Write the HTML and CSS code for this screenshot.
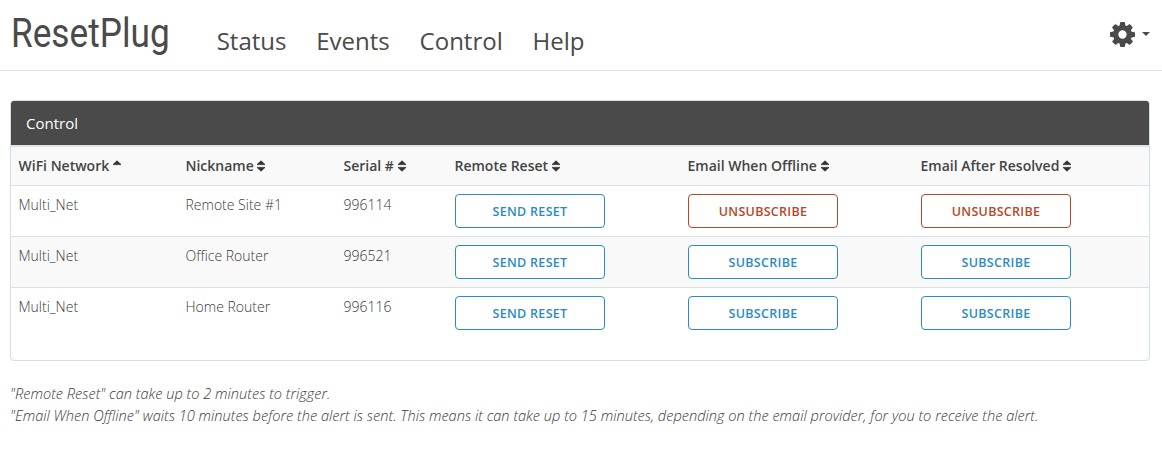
FILE: index.html
```html
<!DOCTYPE html>
<html lang="en">
  <head>
    <meta charset="UTF-8" />
    <title>ResetPlug Control</title>
    <link rel="stylesheet" href="styles.css">
  </head>
  <body>
    <svg class="defs" width="0" height="0">
      <symbol id="sort" viewBox="0 0 10 12">
        <path d="M1 4.6 L5 .8 L9 4.6 Z M1 7.4 L9 7.4 L5 11.2 Z" fill="currentColor" stroke="currentColor" stroke-width=".8" stroke-linejoin="round" />
      </symbol>
      <symbol id="sort-up" viewBox="0 0 10 12">
        <path d="M1 4.6 L5 .8 L9 4.6 Z" fill="currentColor" stroke="currentColor" stroke-width=".8" stroke-linejoin="round" />
      </symbol>
    </svg>

    <nav class="navbar">
      <a class="brand">ResetPlug</a>
      <ul class="nav-links">
        <li>Status</li>
        <li>Events</li>
        <li>Control</li>
        <li>Help</li>
      </ul>
      <div class="settings">
        <svg class="gear" viewBox="0 0 1536 1536">
          <path transform="translate(0 128)" d="M1024 640q0-106-75-181t-181-75-181 75-75 181 75 181 181 75 181-75 75-181zm512-109v222q0 12-8 23t-20 13l-185 28q-19 54-39 91 35 50 107 138 10 12 10 25t-9 23q-27 37-99 108t-94 71q-12 0-26-9l-138-108q-44 23-91 38-16 136-29 186-7 28-36 28h-222q-14 0-24.500-8.500t-11.500-21.500l-28-184q-49-16-90-37l-141 107q-10 9-25 9-14 0-25-11-126-114-165-168-7-10-7-23 0-12 8-23 15-21 51-66.500t54-70.500q-27-50-41-99l-183-27q-13-2-21-12.500t-8-23.500v-222q0-12 8-23t19-13l186-28q14-46 39-92-40-57-107-138-10-12-10-24 0-10 9-23 26-36 98.500-107.500t94.500-71.500q13 0 26 10l138 107q44-23 91-38 16-136 29-186 7-28 36-28h222q14 0 24.500 8.500t11.500 21.500l28 184q49 16 90 37l142-107q9-9 24-9 13 0 25 10 129 119 165 170 7 8 7 22 0 12-8 23-15 21-51 66.500t-54 70.500q26 50 41 98l183 28q13 2 21 12.500t8 23.500z" />
        </svg>
        <span class="caret"></span>
      </div>
    </nav>

    <main class="content">
      <section class="panel">
        <div class="panel-heading">Control</div>
        <table class="control-table">
          <thead>
            <tr>
              <th class="col-network">WiFi Network <svg class="sort-icon"><use href="#sort-up" /></svg></th>
              <th class="col-nick">Nickname <svg class="sort-icon"><use href="#sort" /></svg></th>
              <th class="col-serial">Serial # <svg class="sort-icon"><use href="#sort" /></svg></th>
              <th class="col-action">Remote Reset <svg class="sort-icon"><use href="#sort" /></svg></th>
              <th class="col-action">Email When Offline <svg class="sort-icon"><use href="#sort" /></svg></th>
              <th>Email After Resolved <svg class="sort-icon"><use href="#sort" /></svg></th>
            </tr>
          </thead>
          <tbody>
            <tr>
              <td>Multi_Net</td>
              <td>Remote Site #1</td>
              <td>996114</td>
              <td><button class="btn">Send Reset</button></td>
              <td><button class="btn btn-danger">Unsubscribe</button></td>
              <td><button class="btn btn-danger">Unsubscribe</button></td>
            </tr>
            <tr>
              <td>Multi_Net</td>
              <td>Office Router</td>
              <td>996521</td>
              <td><button class="btn">Send Reset</button></td>
              <td><button class="btn">Subscribe</button></td>
              <td><button class="btn">Subscribe</button></td>
            </tr>
            <tr>
              <td>Multi_Net</td>
              <td>Home Router</td>
              <td>996116</td>
              <td><button class="btn">Send Reset</button></td>
              <td><button class="btn">Subscribe</button></td>
              <td><button class="btn">Subscribe</button></td>
            </tr>
          </tbody>
        </table>
      </section>

      <div class="notes">
        <p>"Remote Reset" can take up to 2 minutes to trigger.</p>
        <p>"Email When Offline" waits 10 minutes before the alert is sent. This means it can take up to 15 minutes, depending on the email provider, for you to receive the alert.</p>
      </div>
    </main>
  </body>
</html>
```

FILE: styles.css
```css
body {
  margin: 0;
  font-family: "Open Sans", sans-serif;
  font-size: 14px;
  line-height: 20px;
  color: #444;
  background: #fff;
}
.defs {
  display: block;
  height: 0;
}
.navbar {
  display: flex;
  height: 70px;
  padding: 0 12px 0 10.5px;
  border-bottom: 1px solid #d6e4ec;
}
.brand {
  display: block;
  width: 158px;
  margin-top: 9px;
  font-family: Roboto, sans-serif;
  font-size: 40px;
  line-height: 50px;
  color: #4a4a4a;
  white-space: nowrap;
  transform: scaleX(0.88);
  transform-origin: left center;
}
.nav-links {
  display: flex;
  gap: 30px;
  margin: 24px 0 0 48.2px;
  padding: 0;
  list-style: none;
  font-size: 24px;
  line-height: 34px;
  font-weight: 400;
  color: #4a4a4a;
}
.nav-links li {
  margin-right: -0.2px;
}
.settings {
  display: flex;
  align-items: center;
  gap: 7px;
  height: 24px;
  margin: 22px 0 0 auto;
}
.gear {
  width: 25px;
  height: 25px;
  fill: #4a4a4a;
}
.caret {
  width: 0;
  height: 0;
  border-top: 4px solid #4a4a4a;
  border-left: 4px solid transparent;
  border-right: 4px solid transparent;
}
.content {
  padding: 29px 12px 0 10px;
}
.panel {
  height: 261px;
  box-sizing: border-box;
  border: 1px solid #d0e0ea;
  border-radius: 4px;
  overflow: hidden;
}
.panel-heading {
  height: 44px;
  padding: 12px 15px;
  box-sizing: border-box;
  background: #4a4a4a;
  color: #fff;
  font-size: 15px;
}
.control-table {
  width: 100%;
  border-collapse: collapse;
  table-layout: fixed;
  border-top: 2px solid #dbe4ea;
}
.control-table th {
  height: 39px;
  padding: 0 8px 0 7.5px;
  box-sizing: border-box;
  text-align: left;
  font-weight: 600;
  background: #f9f9f9;
  border-bottom: 1px solid #dbe2e7;
  white-space: nowrap;
}
.col-network {
  width: 167px;
}
.col-nick {
  width: 158px;
}
.col-serial {
  width: 111px;
}
.col-action {
  width: 233px;
}
.control-table td {
  height: 51px;
  padding: 8px;
  box-sizing: border-box;
  vertical-align: top;
  font-weight: 300;
  line-height: 22px;
  color: #3a3a3a;
  border-bottom: 1px solid #dbe2e7;
}
.control-table td:not(:nth-child(n+4)) {
  padding-left: 7.5px;
}
.control-table tbody tr:nth-child(even) td {
  background: #f9f9f9;
}
.control-table tbody tr:last-child td {
  border-bottom: 0;
}
.sort-icon {
  width: 10px;
  height: 12px;
  margin-left: -1px;
  vertical-align: -1px;
  color: #333;
}
.btn {
  display: block;
  width: 150px;
  height: 34px;
  padding: 1px 0 0;
  border: 1px solid #2c8bc0;
  border-radius: 4px;
  background: #fff;
  color: #2c8bc0;
  font-family: inherit;
  font-size: 12.5px;
  font-weight: 600;
  letter-spacing: 0.3px;
  text-transform: uppercase;
}
.btn-danger {
  border-color: #b5482a;
  color: #b5482a;
}
.notes {
  margin-top: 21px;
  font-size: 14.6px;
  font-style: italic;
  font-weight: 300;
  line-height: 22px;
  color: #3a3a3a;
}
.notes p {
  margin: 0;
}
```
